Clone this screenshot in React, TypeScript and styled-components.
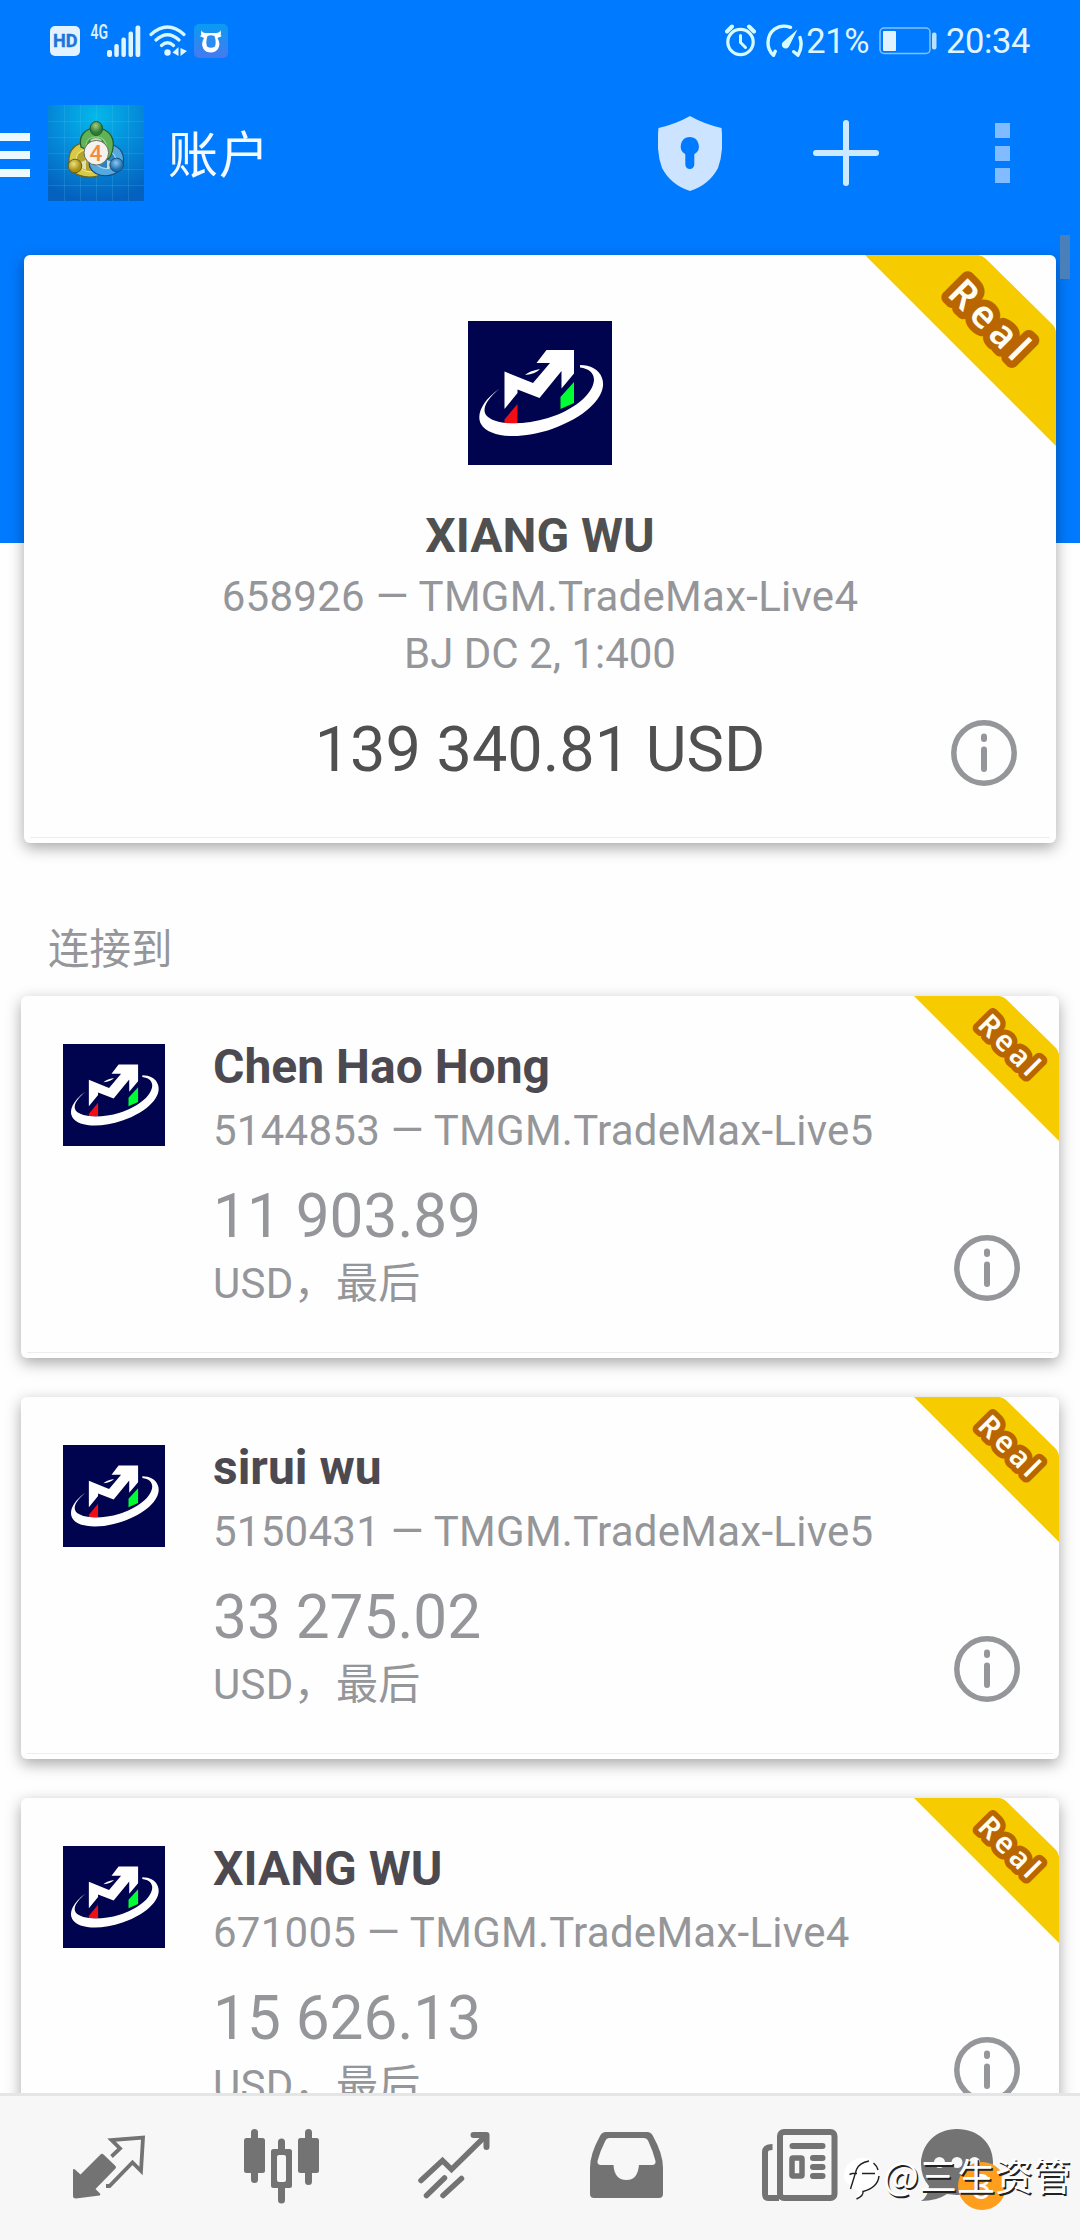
import React from "react";
import styled, { createGlobalStyle } from "styled-components";

const GlobalStyle = createGlobalStyle`
  * { box-sizing: border-box; }
  html, body { margin: 0; padding: 0; background: #fff; }
  body { font-family: Roboto, "Noto Sans CJK SC", sans-serif; }
`;

const Screen = styled.div`
  width: 1080px;
  height: 2240px;
  display: flex;
  flex-direction: column;
  overflow: hidden;
  background: linear-gradient(#007aff 543px, #fefefe 543px);
`;

const StatusBar = styled.div`
  height: 81px;
  flex: none;
  display: flex;
  justify-content: space-between;
  align-items: center;
  padding: 0 50px;
  color: #e0f5ff;
`;

const StatusGroup = styled.div`
  display: flex;
  align-items: center;
  height: 40px;
`;

const StatusText = styled.span<{ $gap: number }>`
  font-size: 34.5px;
  line-height: 40px;
  padding-top: 1px;
  margin-left: ${(p) => p.$gap}px;
  letter-spacing: -0.4px;
`;

const Toolbar = styled.header`
  height: 144px;
  flex: none;
  display: flex;
  align-items: center;
  color: #f4faff;
`;

const MenuBars = styled.div`
  width: 30px;
  height: 44px;
  margin-top: 3px;
  display: flex;
  flex-direction: column;
  justify-content: space-between;
  i { height: 8px; background: #ecf9ff; }
`;

const AppIcon = styled.div`
  width: 96px;
  height: 96px;
  margin-left: 18px;
  svg { display: block; }
`;

const Title = styled.h1`
  margin: 6px 0 0 24px;
  flex: 1;
  font-size: 50px;
  line-height: 60px;
  letter-spacing: 1px;
  font-weight: 400;
`;

const Actions = styled.div`
  display: flex;
  align-items: center;
  gap: 91px;
  padding-right: 70px;
`;

const MoreDots = styled.div`
  width: 15px;
  height: 60px;
  margin-left: 25px;
  display: flex;
  flex-direction: column;
  justify-content: space-between;
  i { height: 15px; background: #80bcff; }
`;

const Content = styled.main`
  flex: 1;
  min-height: 0;
  position: relative;
  overflow: hidden;
  padding: 30px 21px 0;
  color: #95969a;
`;

const ScrollThumb = styled.div`
  position: absolute;
  right: 10px;
  top: 10px;
  width: 10px;
  height: 44px;
  background: #4a80ba;
`;

const Card = styled.section`
  position: relative;
  background: #fefefe;
  border-radius: 6px;
  box-shadow: 0 5px 15px rgba(0, 0, 0, 0.34);
  &::after {
    content: "";
    position: absolute;
    left: 6px;
    right: 6px;
    bottom: 5px;
    height: 1px;
    background: #ededed;
  }
`;

const ActiveCard = styled(Card)`
  height: 588px;
  margin: 0 3px;
  padding-top: 66px;
  display: flex;
  flex-direction: column;
  align-items: center;
`;

const SavedCard = styled(Card)`
  height: 362px;
  margin-bottom: 39px;
  padding: 48px 42px 0;
  display: flex;
  gap: 48px;
`;

const Details = styled.div`
  display: flex;
  flex-direction: column;
`;

const Name = styled.div<{ $top: number; $color: string }>`
  margin-top: ${(p) => p.$top}px;
  font-size: 48px;
  line-height: 56px;
  font-weight: 700;
  color: ${(p) => p.$color};
`;

const Detail = styled.div<{ $top?: number; $tracking?: number }>`
  margin-top: ${(p) => p.$top ?? 0}px;
  font-size: 42px;
  line-height: 57px;
  letter-spacing: ${(p) => p.$tracking ?? 0}px;
  white-space: nowrap;
`;

const Balance = styled.div<{ $size: number; $top: number }>`
  margin-top: ${(p) => p.$top}px;
  font-size: ${(p) => p.$size}px;
  line-height: 76px;
`;

const DarkBalance = styled(Balance)`
  color: #505050;
`;

const InfoSpot = styled.div<{ $bottom: number }>`
  position: absolute;
  right: 39px;
  bottom: ${(p) => p.$bottom}px;
  width: 66px;
  height: 66px;
`;

const RibbonSpot = styled.div`
  position: absolute;
  top: 0;
  right: 0;
  border-top-right-radius: 6px;
  overflow: hidden;
  svg { display: block; }
`;

const SectionLabel = styled.h2`
  margin: 72px 0 12px 27px;
  font-size: 41.5px;
  line-height: 69px;
  font-weight: 400;
`;

const TabBar = styled.nav`
  height: 147px;
  flex: none;
  position: relative;
  display: flex;
  padding: 33px 23px 0;
  border-top: 3px solid #e5e5e5;
  background: #f7f7f7;
  color: #737373;
`;

const Tab = styled.div`
  flex: 1;
  display: flex;
  justify-content: center;
  svg { display: block; }
`;

const Watermark = styled.div`
  position: absolute;
  right: 9px;
  top: 51px;
  display: flex;
  align-items: center;
  gap: 3px;
  height: 54px;
  font-family: "Noto Sans CJK SC", sans-serif;
  font-size: 38px;
  line-height: 54px;
  color: #fff;
  text-shadow: 1.5px 1.5px 0 #222;
`;

const HdIcon = () => (
  <svg width="30" height="30" viewBox="0 0 30 30">
    <rect width="30" height="30" rx="5" fill="#e4f2ff" />
    <text x="3" y="21.2" fontSize="18.5" fontWeight="700" fill="#1b76dc" stroke="#1b76dc" strokeWidth="0.4" textLength="24.5" lengthAdjust="spacingAndGlyphs" fontFamily="Roboto, sans-serif">HD</text>
  </svg>
);

const SignalIcon = () => (
  <svg width="51" height="36" viewBox="0 -2 51 36" style={{ marginLeft: 10, marginBottom: 2, overflow: "visible" }}>
    <text x="0.5" y="15" fontSize="19.5" fontWeight="600" fill="#d9efff" textLength="17.5" lengthAdjust="spacingAndGlyphs" fontFamily="Roboto, sans-serif">4G</text>
    <g fill="#e0f5ff">
      <rect x="17" y="26" width="5" height="7" rx="2" />
      <rect x="24.3" y="20" width="4.5" height="13" rx="2" />
      <rect x="31.4" y="13.5" width="4.5" height="19.5" rx="2" />
      <rect x="38.5" y="7.5" width="4.5" height="25.5" rx="2" />
      <rect x="45.5" y="1.5" width="4.8" height="31.5" rx="2" />
    </g>
  </svg>
);

const WifiIcon = () => (
  <svg width="38" height="34" viewBox="0 0 38 34" style={{ marginLeft: 8 }} fill="none" stroke="#d8f6ff" strokeWidth="3.2" strokeLinecap="round">
    <path d="M2 10.500Q18.500-4.500 35 10.500M7 16Q18.500 5.500 30 16M12.500 21.500Q18.500 16 24.500 21.500" />
    <circle cx="18.5" cy="28.5" r="3.2" fill="#e4f6ff" stroke="none" />
    <path d="M29.500 23v9l-6-3.500zM31.500 24v8l6.500-5z" fill="#e4f6ff" stroke="none" />
  </svg>
);

const BullIcon = () => (
  <svg width="34" height="34" viewBox="0 0 34 34" style={{ marginLeft: 7 }}>
    <defs>
      <linearGradient id="bull" x1="0" y1="0" x2="0" y2="1">
        <stop offset="0" stopColor="#089cf2" />
        <stop offset="1" stopColor="#4878f0" />
      </linearGradient>
    </defs>
    <rect width="34" height="34" rx="5" fill="url(#bull)" />
    <path d="M7.500 6Q8 9 11.500 9L22 9Q26 9 26.500 6L27 9.500Q26 11.500 28 12L23.500 14Q27 20 24 25 21 28.500 17 28.500 12 28.500 9.500 25 6.500 20 10 14L5.500 12Q8 11.500 7 9.500Z" fill="#fff" />
    <path d="M13.500 12Q17 10.500 20.500 12 22.500 18 21 22.500 17 25 13 22.500 11.500 18 13.500 12Z" fill="#2e8bf1" />
  </svg>
);

const AlarmIcon = () => (
  <svg width="32" height="34" viewBox="0 0 32 34" fill="none" stroke="#d6fbff" strokeLinecap="round">
    <circle cx="15.5" cy="18" r="12.7" strokeWidth="3.2" />
    <path d="M2 7.500l5-5M29 7.500l-5-5" strokeWidth="4" />
    <path d="M15.500 11.500v7l5 5" strokeWidth="3" />
  </svg>
);

const GaugeIcon = () => (
  <svg width="38" height="34" viewBox="0 0 38 34" style={{ marginLeft: 9 }} fill="none" stroke="#d6fbff" strokeWidth="3.4" strokeLinecap="round" strokeLinejoin="round">
    <path d="M24.500 3.300C12-1 2 7.500 2 19c0 5 2.500 9.500 5.500 12.300l1.700-4M34 13.500c2 6 1.300 12-2 17.700l-4.200-3.500" />
    <path d="M31.500 5.500L23 22.500a3.800 3.800 0 1 1-6-4.500z" fill="#d6fbff" stroke="none" />
  </svg>
);

const BatteryIcon = () => (
  <svg width="58" height="28" viewBox="0 0 58 28" style={{ marginLeft: 10 }}>
    <rect x="1" y="1" width="50" height="25.5" rx="4" fill="none" stroke="#86c2f8" strokeWidth="1.5" />
    <rect x="4" y="4" width="13" height="20" rx="1" fill="#e2f2ff" />
    <rect x="53" y="5.5" width="4.5" height="17" rx="2" fill="#b8e3ff" />
  </svg>
);

const MetaTraderIcon = () => (
  <svg width="96" height="96" viewBox="0 0 96 96">
    <defs>
      <radialGradient id="mtBg" cx="50%" cy="12%" r="88%">
        <stop offset="0" stopColor="#04b8ea" />
        <stop offset="0.45" stopColor="#0490dc" />
        <stop offset="1" stopColor="#0462be" />
      </radialGradient>
      <radialGradient id="mtG" cx="45%" cy="30%"><stop offset="0" stopColor="#a5cc80" /><stop offset="1" stopColor="#2c7c34" /></radialGradient>
      <radialGradient id="mtY" cx="40%" cy="35%"><stop offset="0" stopColor="#eee27a" /><stop offset="1" stopColor="#a88e14" /></radialGradient>
      <radialGradient id="mtB" cx="45%" cy="35%"><stop offset="0" stopColor="#8fc8ee" /><stop offset="1" stopColor="#1a6fb2" /></radialGradient>
    </defs>
    <rect width="96" height="96" fill="url(#mtBg)" />
    <path d="M16.500 0v96M32.500 0v96M48.500 0v96M64.500 0v96M80.500 0v96M0 16.500h96M0 32.500h96M0 48.500h96M0 64.500h96M0 80.500h96" stroke="#5cc8f0" strokeOpacity=".2" />
    <path d="M21 57C20 44 29 37 40 38L56 68Q50 72 42 72 30 72 24 66Z" fill="#d8ca48" stroke="#6a611c" strokeWidth="1.2" />
    <path d="M28 56Q28 46 38 45L48 66Q42 68 35 65Z" fill="#b5a42c" stroke="#f0e67c" strokeWidth="1.2" />
    <path d="M61 39C74 41 78 52 74 61 70 70 60 72 52 70 45 68 41 63 41 57Z" fill="#55a9e0" stroke="#174d78" strokeWidth="1.2" />
    <path d="M61 46Q69 50 68 58 60 68 49 60Z" fill="#2d82c2" stroke="#9cd6f4" strokeWidth="1.2" />
    <path d="M33 42C30 30 38 23 48 23 60 23 67 32 65 43 64 49 63 52 60 54Z" fill="#5fb257" stroke="#1f5c2a" strokeWidth="1.2" />
    <path d="M38 40Q39 32 48 32 58 32 59 44L56 48Z" fill="#3a8a3e" stroke="#9bd284" strokeWidth="1.2" />
    <path d="M42 35Q48 31 54 35L51 38H45ZM33 57L38 55 38 65 34 63ZM64 57L59 55 59 64 63 63Z" fill="#e8efdc" opacity=".8" />
    <ellipse cx="48.3" cy="23.5" rx="6.3" ry="7" fill="url(#mtG)" stroke="#225a2a" />
    <circle cx="27" cy="61" r="6.8" fill="url(#mtY)" stroke="#6b5e18" />
    <circle cx="68.7" cy="60" r="6.8" fill="url(#mtB)" stroke="#1a4f79" />
    <circle cx="48.3" cy="47.7" r="12.3" fill="#f5f1ee" stroke="#63705c" />
    <text x="48" y="55.6" textAnchor="middle" fontSize="22.5" fontWeight="500" fill="#f58b3c" fontFamily="Roboto, sans-serif">4</text>
  </svg>
);

const ShieldIcon = () => (
  <svg width="64" height="75" viewBox="0 0 64 75">
    <path d="M32 0Q46 8 63.500 12 66 36 60 52 51 69 32 75 13 69 4 52-2 36 .500 12 18 8 32 0Z" fill="#cce4ff" />
    <path d="M31.700 21a9.300 9.300 0 0 1 4.600 17.300V48.500a4.500 4.500 0 0 1-9 0V38.300A9.300 9.300 0 0 1 31.700 21Z" fill="#007aff" />
  </svg>
);

const PlusIcon = () => (
  <svg width="66" height="66" viewBox="0 0 66 66" stroke="#cceaff" strokeWidth="6" strokeLinecap="round">
    <path d="M33 3v60M3 33h60" />
  </svg>
);

const InfoIcon = () => (
  <svg width="66" height="66" viewBox="0 0 66 66" fill="none" stroke="#95969a">
    <circle cx="33" cy="33" r="30.2" strokeWidth="5.5" />
    <path d="M33 29.500v19.500M33 16.500v2.500" strokeWidth="6" strokeLinecap="round" />
  </svg>
);

const BrokerLogo = ({ size }: { size: number }) => (
  <svg width={size} height={size} viewBox="0 0 144 144" style={{ flex: "none" }}>
    <rect width="144" height="144" fill="#00044e" />
    <path d="M36.500 98.500L49.500 83V102.500L36.500 102Z" fill="#f00d14" />
    <path d="M92.500 76L106 61V82L92.500 88Z" fill="#00ff32" />
    <path d="M31.500 67.500C14 80 8 94 13 103 21 117 52 119 84 108 121 95 140 73 134 57 131 48 122 44 112 44L112 46.500C121 47.500 126 52 126 59 125 74 104 90 80 97 54 105 26 104 18 94 14 88 18 79 31.500 67.500Z" fill="#fff" />
    <path d="M36.500 50.500L65 62 82 42H68.500L78.500 29H106V52.500L93.500 67.500V50L71.500 77 49.500 68.500V72L36.500 88Z" fill="#fff" />
    <path d="M57 54Q61 50 72 48Q68 53 57 54Z" fill="#fff" />
  </svg>
);

interface RibbonProps { size: number; start: number; end: number; font: number; cx: number; cy: number; length: number }

const Ribbon = ({ size, start, end, font, cx, cy, length }: RibbonProps) => (
  <RibbonSpot>
    <svg width={size} height={size} viewBox={`0 0 ${size} ${size}`}>
      <path d={`M0 0H${start - 3}Q${start + 2} 0 ${start + 6} 4L${size - 4} ${end - 6}Q${size} ${end - 2} ${size} ${end + 3}V${size}Z`} fill="#f6cb00" />
      <text
        transform={`translate(${cx} ${cy}) rotate(45)`}
        textAnchor="middle"
        fontFamily='"Noto Sans", sans-serif'
        fontSize={font}
        fontWeight="600"
        textLength={length}
        fill="#fffdf2"
        stroke="#b96500"
        strokeWidth={font * 0.37}
        strokeLinejoin="round"
        paintOrder="stroke"
      >Real</text>
    </svg>
  </RibbonSpot>
);

const TradeIcon = () => (
  <svg width="72" height="75" viewBox="0 0 72 75">
    <path d="M0 41Q0 39.500 2 40.500L7.500 45.500 27.500 25.500Q29 24 30.500 25.500L42.500 37Q43.500 38.500 42.500 39.500L22.500 60 27 64.500Q28 66 26.500 66.500L3 69.500Q0 69.500 0 67Z" fill="currentColor" />
    <path d="M38.500 27.500L47 19.500 38.500 11 70 8.500 68 42 59.500 33.500 36.500 57H33" fill="none" stroke="currentColor" strokeWidth="3.8" />
  </svg>
);

const CandlesIcon = () => (
  <svg width="75" height="75" viewBox="0 0 75 75" fill="currentColor">
    <rect x="0" y="9" width="21" height="35" rx="2.5" />
    <rect x="7" y="0" width="7" height="54" rx="3.5" />
    <rect x="54" y="9" width="21" height="35" rx="2.5" />
    <rect x="61" y="0" width="7" height="56" rx="3.5" />
    <path d="M34 20V13a3.500 3.500 0 0 1 7 0v7h4.500a2.500 2.500 0 0 1 2.500 2.500V56.500a2.500 2.500 0 0 1-2.500 2.500H41V71a3.500 3.500 0 0 1-7 0V59H29.500a2.500 2.500 0 0 1-2.500-2.500V22.500a2.500 2.500 0 0 1 2.500-2.500ZM35 26a2 2 0 0 0-2 2V51a2 2 0 0 0 2 2h5a2 2 0 0 0 2-2V28a2 2 0 0 0-2-2Z" />
  </svg>
);

const TrendIcon = () => (
  <svg width="72" height="75" viewBox="0 0 72 75" fill="none" stroke="currentColor" strokeWidth="5.5" strokeLinecap="round">
    <path d="M3 51.500L24.500 31.500 33.500 40.500 68 6.500" strokeLinejoin="miter" />
    <path d="M55.500 6H68.500V18" strokeWidth="6" strokeLinejoin="round" />
    <path d="M8.500 66.500L26.500 49M25 66.500L43.500 49.500" />
  </svg>
);

const InboxIcon = () => (
  <svg width="73" height="75" viewBox="0 0 73 75">
    <path fill="currentColor" fillRule="evenodd" d="M16 3H57Q61 3 63 7 73 25 73 39V65Q73 69 69 69H4Q0 69 0 65V39Q0 25 10 7 12 3 16 3ZM19 9Q16.500 9 15.500 11.500 10 22 7.500 32 7 36 11 36H23.500C24 45 28 51 36.500 51S48 45 49 36H62Q66 36 65.500 32 63 22 58 11.500 57 9 54 9Z" />
  </svg>
);

const NewsIcon = () => (
  <svg width="76" height="75" viewBox="0 0 76 75" fill="none" stroke="currentColor" strokeWidth="6" style={{ marginLeft: 3 }}>
    <rect x="18" y="3" width="54.5" height="66" rx="4" />
    <path d="M17 69H6Q3 69 3 65V23Q3 18 10.500 18" />
    <path d="M30.500 17H60.500M51 29H60.500M51 38H60.500M51 47H60.500" strokeLinecap="round" />
    <rect x="30" y="29" width="10" height="18" rx="1" strokeWidth="5.5" />
  </svg>
);

const ChatIcon = () => (
  <svg width="100" height="82" viewBox="0 0 100 82">
    <path fill="currentColor" d="M36 0C57 0 72 14 72 33S57 66 36 66L26 65Q16 72 0 72 7 68 8 57 0 48 0 35 0 14 36 0Z" />
    <path fill="currentColor" d="M36 0C15 0 0 15 0 35L30 50Z" />
    <circle cx="18.5" cy="33.5" r="5.5" fill="#f7f7f7" />
    <circle cx="36" cy="33.5" r="5.5" fill="#f7f7f7" />
    <circle cx="53.5" cy="33.5" r="5.5" fill="#f7f7f7" />
    <circle cx="61" cy="57" r="24" fill="#ff9d1c" />
    <text x="60.5" y="69.5" textAnchor="middle" fontSize="35" fill="#fff" fontFamily="Roboto, sans-serif">3</text>
  </svg>
);

const WatermarkLogo = () => (
  <svg width="36" height="42" viewBox="0 0 36 42" style={{ marginTop: 9 }}>
    <path d="M19 0C7 0 0 8 0 17 0 22 2 25 6 27L10 20 7 30 14 32.500 12 41 20 34.500C30 32 35 25 35 17 35 7 28 0 19 0Z" fill="#fff" />
    <path d="M6.500 31L12.500 11.500Q15 5 25 3M5.500 16.500L8 15.500H13M18 15.500H31" stroke="#222" strokeWidth="1.4" fill="none" />
    <path d="M29.500 5Q33 8 34 12M35 18C34 27 27 31.500 19 33.500Q20 37.500 12.500 41" stroke="#222" strokeWidth="1.5" fill="none" />
  </svg>
);

const savedAccounts = [
  { name: "Chen Hao Hong", login: "5144853 — TMGM.TradeMax-Live5", balance: "11 903.89" },
  { name: "sirui wu", login: "5150431 — TMGM.TradeMax-Live5", balance: "33 275.02" },
  { name: "XIANG WU", login: "671005 — TMGM.TradeMax-Live4", balance: "15 626.13" },
];

const tabs = [TradeIcon, CandlesIcon, TrendIcon, InboxIcon, NewsIcon, ChatIcon];

export default function App() {
  return (
    <Screen>
      <GlobalStyle />
      <StatusBar>
        <StatusGroup>
          <HdIcon />
          <SignalIcon />
          <WifiIcon />
          <BullIcon />
        </StatusGroup>
        <StatusGroup>
          <AlarmIcon />
          <GaugeIcon />
          <StatusText $gap={2}>21%</StatusText>
          <BatteryIcon />
          <StatusText $gap={9}>20:34</StatusText>
        </StatusGroup>
      </StatusBar>
      <Toolbar>
        <MenuBars><i /><i /><i /></MenuBars>
        <AppIcon><MetaTraderIcon /></AppIcon>
        <Title>账户</Title>
        <Actions>
          <ShieldIcon />
          <PlusIcon />
          <MoreDots><i /><i /><i /></MoreDots>
        </Actions>
      </Toolbar>
      <Content>
        <ActiveCard>
          <BrokerLogo size={144} />
          <Name $top={43} $color="#505050">XIANG WU</Name>
          <Detail $top={4} $tracking={0.27}>658926 — TMGM.TradeMax-Live4</Detail>
          <Detail>BJ DC 2, 1:400</Detail>
          <DarkBalance $size={63} $top={30}>139 340.81 USD</DarkBalance>
          <InfoSpot $bottom={57}><InfoIcon /></InfoSpot>
          <Ribbon size={191} start={115} end={75} font={38} cx={115} cy={74} length={96} />
        </ActiveCard>
        <SectionLabel>连接到</SectionLabel>
        {savedAccounts.map((account) => (
          <SavedCard key={account.login}>
            <BrokerLogo size={102} />
            <Details>
              <Name $top={-5} $color="#4c4a50">{account.name}</Name>
              <Detail $top={7} $tracking={0.27}>{account.login}</Detail>
              <Balance $size={60.3} $top={20}>{account.balance}</Balance>
              <Detail $tracking={0.3}>USD，最后</Detail>
            </Details>
            <InfoSpot $bottom={57}><InfoIcon /></InfoSpot>
            <Ribbon size={145} start={87} end={57} font={29} cx={88} cy={56} length={73} />
          </SavedCard>
        ))}
        <ScrollThumb />
      </Content>
      <TabBar>
        {tabs.map((Icon, index) => (
          <Tab key={index}><Icon /></Tab>
        ))}
        <Watermark>
          <WatermarkLogo />
          <span>@三生资管</span>
        </Watermark>
      </TabBar>
    </Screen>
  );
}
